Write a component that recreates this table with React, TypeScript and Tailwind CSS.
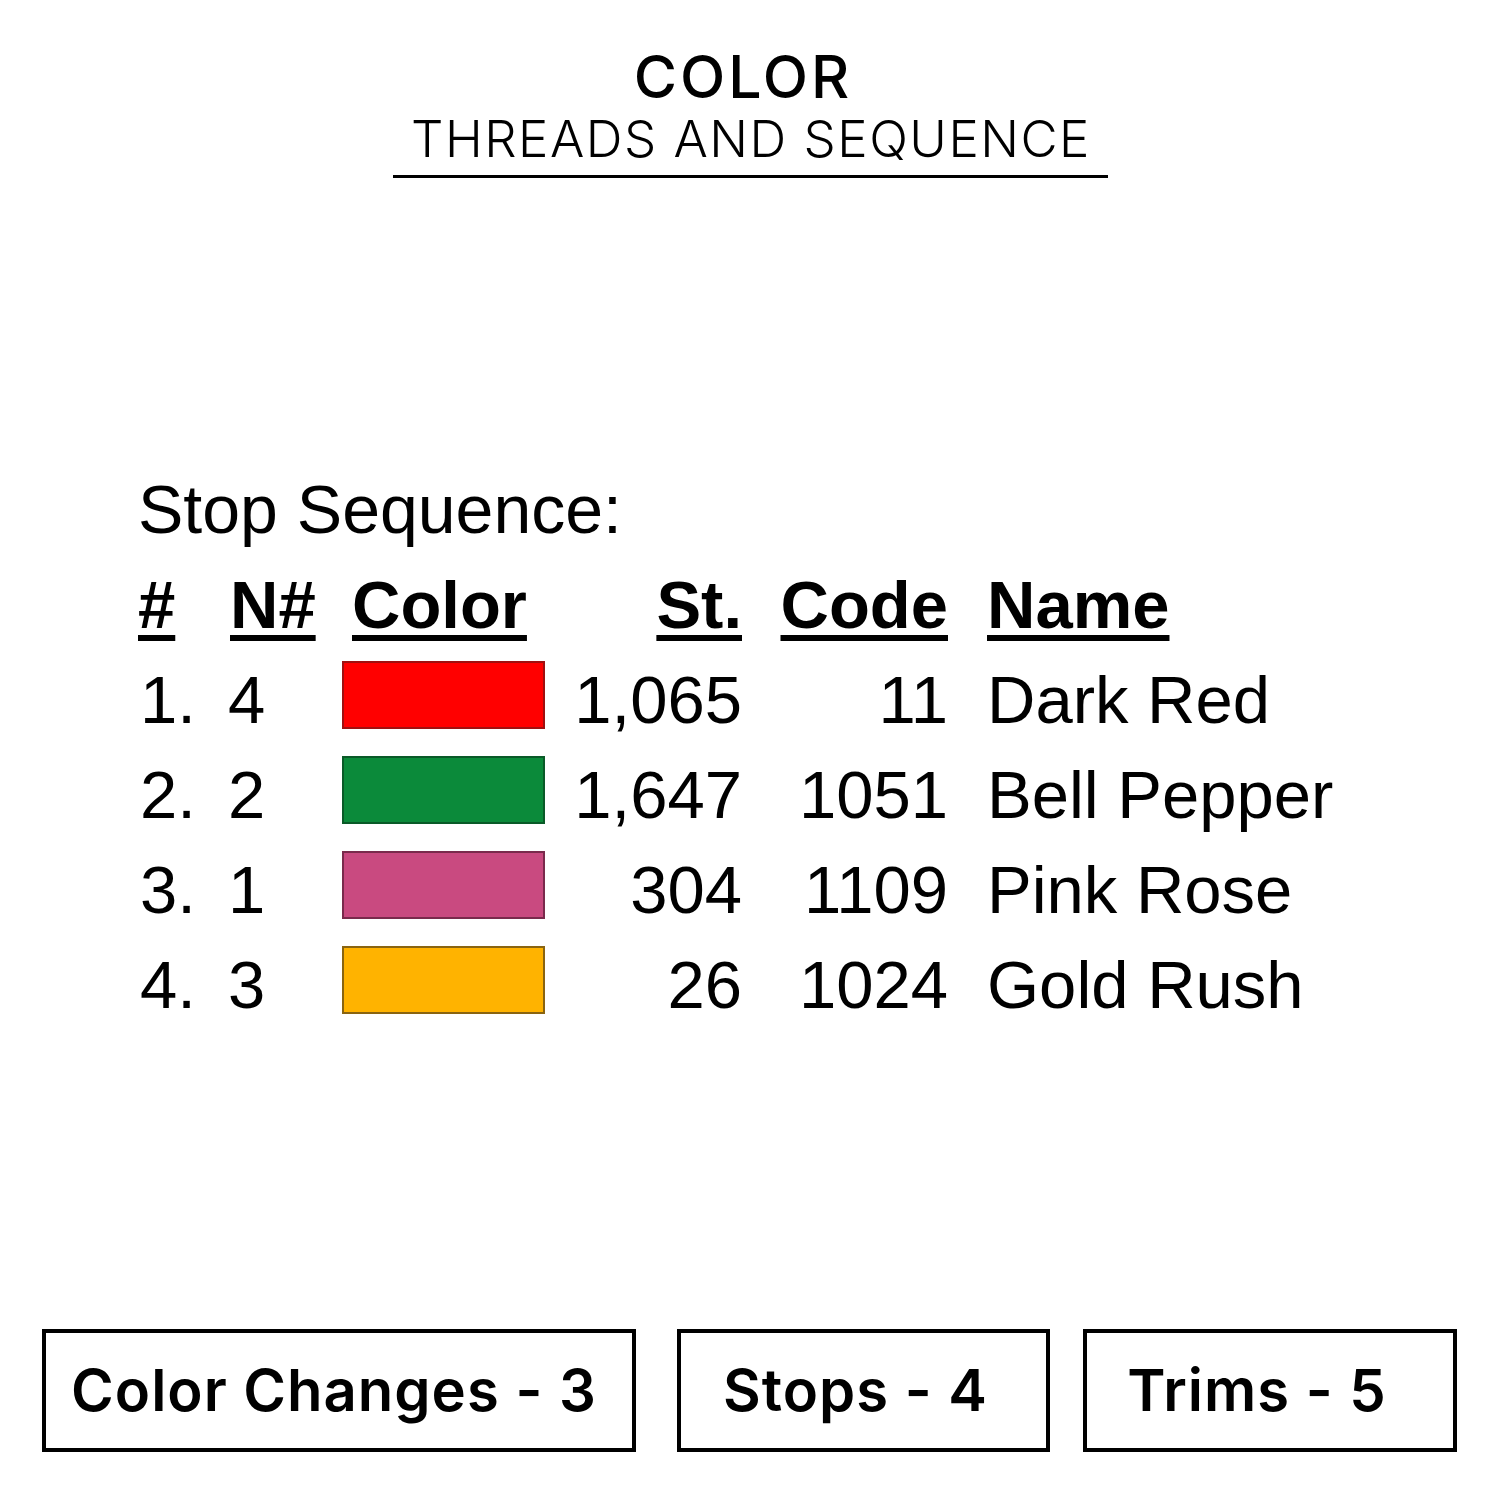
const threads = [
  { n: '1.', needle: '4', color: 'bg-[#ff0000] border-[#a01010]', st: '1,065', code: '11', name: 'Dark Red' },
  { n: '2.', needle: '2', color: 'bg-[#0b8a3a] border-[#0a5a28]', st: '1,647', code: '1051', name: 'Bell Pepper' },
  { n: '3.', needle: '1', color: 'bg-[#c94a80] border-[#7a2a4c]', st: '304', code: '1109', name: 'Pink Rose' },
  { n: '4.', needle: '3', color: 'bg-[#ffb300] border-[#8a6410]', st: '26', code: '1024', name: 'Gold Rush' },
]

const stats = [
  { label: 'Color Changes - 3', w: 'w-[594px]', ml: 'ml-[42px]', pr: 'pr-[10px]' },
  { label: 'Stops - 4', w: 'w-[373px]', ml: 'ml-[41px]', pr: 'pr-[16px]' },
  { label: 'Trims - 5', w: 'w-[374px]', ml: 'ml-[33px]', pr: 'pr-[26px]' },
]

const cols = 'grid grid-cols-[90px_114px_203px_197px_206px_1fr]'

export default function App() {
  return (
    <div className="w-[1500px] h-[1500px] bg-white text-black flex flex-col">
      {/* title */}
      <div className="pt-[47px] flex flex-col items-center font-['Inter',sans-serif]">
        <div className="text-[59px] leading-[59px] font-medium tracking-[3px] pr-[14px]">COLOR</div>
        <div className="mt-[7px] text-[51px] leading-[51px] font-light tracking-[1.5px] pl-[2px]">
          THREADS AND SEQUENCE
        </div>
        <div className="mt-[11px] w-[715px] h-[3px] bg-black ml-[1px]" />
      </div>

      {/* stop sequence table */}
      <div className="mt-[284px] pl-[138px] font-['Liberation_Sans',Arial,sans-serif] text-[67px] leading-[95px]">
        <div className="text-[68px]">Stop Sequence:</div>
        <div className={`${cols} font-bold`}>
          <span className="underline decoration-[6px] underline-offset-[7px]">#</span>
          <span className="pl-[2px]"><span className="underline decoration-[6px] underline-offset-[7px]">N#</span></span>
          <span className="pl-[10px]"><span className="underline decoration-[6px] underline-offset-[7px]">Color</span></span>
          <span className="text-right"><span className="underline decoration-[6px] underline-offset-[7px]">St.</span></span>
          <span className="text-right"><span className="underline decoration-[6px] underline-offset-[7px]">Code</span></span>
          <span className="pl-[39px]"><span className="underline decoration-[6px] underline-offset-[7px]">Name</span></span>
        </div>
        {threads.map((t) => (
          <div key={t.n} className={`${cols} items-center`}>
            <span className="pl-[2px]">{t.n}</span>
            <span>{t.needle}</span>
            <div className={`h-[68px] mb-[9px] border-2 ${t.color}`} />
            <span className="text-right">{t.st}</span>
            <span className="text-right">{t.code}</span>
            <span className="pl-[39px]">{t.name}</span>
          </div>
        ))}
      </div>

      {/* totals */}
      <div className="mt-[297px] flex font-['Inter',sans-serif]">
        {stats.map((s) => (
          <div
            key={s.label}
            className={`${s.w} ${s.ml} ${s.pr} h-[123px] border-4 border-black flex items-center justify-center text-[58px] font-semibold tracking-[1px]`}
          >
            {s.label}
          </div>
        ))}
      </div>
    </div>
  )
}
